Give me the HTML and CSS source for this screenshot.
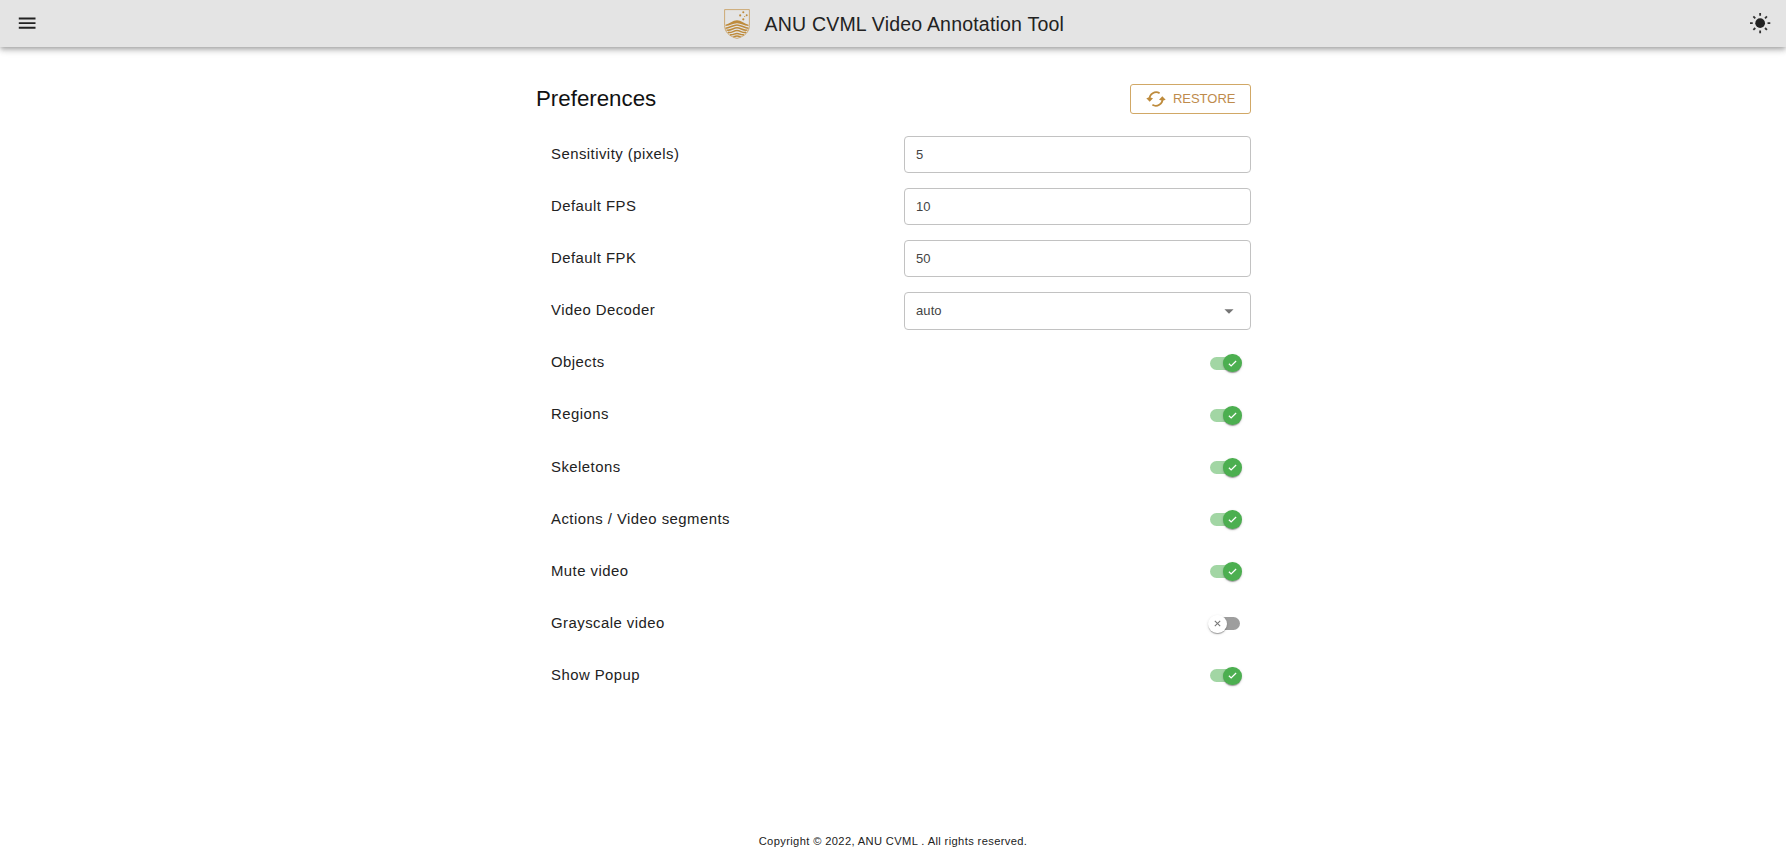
FILE: index.html
```html
<!DOCTYPE html>
<html lang="en">
<head>
<meta charset="utf-8">
<title>ANU CVML Video Annotation Tool</title>
<link rel="stylesheet" href="styles.css">
</head>
<body>
<header class="bar">
  <svg class="menu" viewBox="0 0 24 24"><path d="M3 18h18v-2H3v2zm0-5h18v-2H3v2zm0-7v2h18V6H3z"/></svg>
  <div class="brand">
    <svg class="logo" viewBox="0 0 26 30" fill="none" stroke="#be8b3c">
      <path stroke-width=".9" stroke="#c9a368" d="M.6.6H25.4V16.5C25.4 23 20.5 27.5 13 29.4 5.500 27.500.6 23 .6 16.500Z"/>
      <path fill="#be8b3c" stroke="none" d="M1.500 15.700C5 15.200 9 11.300 13 11.300S21 15.200 24.500 15.700V16.900C20 16.900 17 14.200 13 14.200S6 16.900 1.500 16.900Z"/>
      <path stroke-width="1.500" d="M1.500 19.200C5.500 19.200 9 15.900 13 15.900S20.500 19.200 24.500 19.200M2.500 20.900C6 22.300 9.500 18.800 13 18.800S20 22.300 23.500 20.900M3.800 23.300C7.500 24.500 9.500 21.600 13 21.600S18.500 24.500 22.200 23.300M6 25.700C9 26.500 10.500 24.400 13 24.400S17 26.500 20 25.700M9.300 27.500C11 27.900 11.500 27 13 27S15 27.900 16.700 27.500"/>
      <g fill="#be8b3c" stroke="none"><circle cx="19.300" cy="3.200" r="1.050"/><circle cx="16.200" cy="6.400" r="1.050"/><circle cx="22.700" cy="6.200" r="1"/><circle cx="20.700" cy="7.500" r=".6"/><circle cx="19.300" cy="10.300" r="1.100"/></g>
    </svg>
    <h1 class="title">ANU CVML Video Annotation Tool</h1>
  </div>
  <svg class="sun" viewBox="0 0 22 22"><circle cx="11" cy="11" r="4.800"/><path stroke="#333" stroke-width="1.800" d="M11 1v2.700M11 18.300V21M1 11h2.700M18.300 11H21M4.300 4.300l1.900 1.900M15.800 15.800l1.900 1.900M4.300 17.700l1.900-1.900M15.800 6.200l1.900-1.900"/></svg>
</header>
<main class="page">
  <div class="head">
    <h2 class="heading">Preferences</h2>
    <button class="restore"><svg class="cycle" viewBox="0 0 20 20" fill="none" stroke="#be8b3c" stroke-width="1.800"><path d="M13.600 4.200A6.700 6.700 0 0 0 3.500 10.300M6.400 15.800A6.700 6.700 0 0 0 16.500 9.700"/><path fill="#be8b3c" stroke="none" d="M.3 9.200L3.500 8.200 7 9.200 3.700 12.800ZM13 10.800L16.500 11.800 19.700 10.800 16.300 7.200Z"/></svg>RESTORE</button>
  </div>
  <div class="row"><span>Sensitivity (pixels)</span><div class="field">5</div></div>
  <div class="row"><span>Default FPS</span><div class="field">10</div></div>
  <div class="row"><span>Default FPK</span><div class="field">50</div></div>
  <div class="row"><span>Video Decoder</span><div class="field">auto<svg class="caret" viewBox="0 0 24 24"><path d="M7 10l5 5 5-5z"/></svg></div></div>
  <div class="row"><span>Objects</span><div class="toggle on"><i class="thumb"><svg viewBox="0 0 10 10"><path d="M1 5.200l2.500 2.500L9 2.200"/></svg></i></div></div>
  <div class="row"><span>Regions</span><div class="toggle on"><i class="thumb"><svg viewBox="0 0 10 10"><path d="M1 5.200l2.500 2.500L9 2.200"/></svg></i></div></div>
  <div class="row"><span>Skeletons</span><div class="toggle on"><i class="thumb"><svg viewBox="0 0 10 10"><path d="M1 5.200l2.500 2.500L9 2.200"/></svg></i></div></div>
  <div class="row"><span>Actions / Video segments</span><div class="toggle on"><i class="thumb"><svg viewBox="0 0 10 10"><path d="M1 5.200l2.500 2.500L9 2.200"/></svg></i></div></div>
  <div class="row"><span>Mute video</span><div class="toggle on"><i class="thumb"><svg viewBox="0 0 10 10"><path d="M1 5.200l2.500 2.500L9 2.200"/></svg></i></div></div>
  <div class="row"><span>Grayscale video</span><div class="toggle"><i class="thumb"><svg viewBox="0 0 10 10"><path d="M2 2l6 6M8 2L2 8"/></svg></i></div></div>
  <div class="row"><span>Show Popup</span><div class="toggle on"><i class="thumb"><svg viewBox="0 0 10 10"><path d="M1 5.200l2.500 2.500L9 2.200"/></svg></i></div></div>
</main>
<footer class="foot">Copyright © 2022, ANU CVML . All rights reserved.</footer>
</body>
</html>
```
FILE: styles.css
```css
* { box-sizing: border-box; }
body {
  margin: 0;
  height: 864px;
  display: flex;
  flex-direction: column;
  overflow: hidden;
  background: #fff;
  color: #222;
  font-family: "Liberation Sans", Arial, sans-serif;
}
.bar {
  height: 46.500px;
  flex: none;
  display: flex;
  align-items: center;
  justify-content: space-between;
  padding: 0 15px 0 15.500px;
  background: #e4e4e4;
  box-shadow: 0 2px 4px -1px rgba(0,0,0,.2), 0 4px 5px rgba(0,0,0,.14), 0 1px 10px rgba(0,0,0,.12);
}
.menu, .sun { width: 22.300px; height: 22.300px; fill: #222; }
.brand { display: flex; align-items: center; gap: 14px; margin-left: 2px; }
.logo { width: 26px; height: 30px; margin-top: 1px; }
.title { margin: 2px 0 0; font-size: 19.550px; font-weight: 400; letter-spacing: .19px; line-height: 30px; white-space: nowrap; }
.page { width: 715px; margin: 36px auto 0; padding-left: .5px; }
.head {
  height: 46px;
  display: flex;
  align-items: flex-start;
  justify-content: space-between;
}
.heading { margin: 1px 0 0; font-size: 22.300px; font-weight: 400; line-height: 30px; color: #111; }
.restore {
  width: 120.500px;
  height: 30.500px;
  margin-top: 1px;
  padding: 0 14px 0 15px;
  display: flex;
  align-items: center;
  justify-content: space-between;
  border: 1.500px solid #d1a866;
  border-radius: 3px;
  background: none;
  color: #be8b4c;
  font: 13px "Liberation Sans", Arial, sans-serif;
}
.cycle { width: 20px; height: 20px; }
.row {
  height: 52.150px;
  padding-left: 15px;
  display: flex;
  align-items: center;
  justify-content: space-between;
  font-size: 14.900px;
  letter-spacing: .465px;
}
.row > span { margin-bottom: 1.800px; }
.field {
  width: 346.500px;
  height: 37.200px;
  padding: 0 10px 0 11px;
  display: flex;
  align-items: center;
  justify-content: space-between;
  border: 1px solid #c2c2c2;
  border-radius: 4px;
  color: #444;
  font-size: 13px;
  letter-spacing: .1px;
}
.caret { width: 22px; height: 22px; fill: #757575; }
.toggle {
  width: 29.500px;
  height: 13px;
  margin-right: 11px;
  display: flex;
  align-items: center;
  border-radius: 7px;
  background: #9e9e9e;
}
.toggle.on { justify-content: flex-end; background: #a2d6a4; }
.thumb {
  width: 18.600px;
  height: 18.600px;
  flex: none;
  margin: 0 -2px;
  display: grid;
  place-items: center;
  border-radius: 50%;
  background: #fff;
  box-shadow: 0 2px 1px -1px rgba(0,0,0,.2), 0 1px 1px rgba(0,0,0,.14), 0 1px 3px rgba(0,0,0,.14);
}
.thumb svg { width: 9px; height: 9px; fill: none; stroke: #777; stroke-width: 1.200; }
.on .thumb { background: #4caf50; }
.on .thumb svg { stroke: #fff; stroke-width: 1.400; }
.foot {
  margin: auto 0 15.500px;
  text-align: center;
  font-size: 11.150px;
  line-height: 16px;
  letter-spacing: .37px;
}
```
